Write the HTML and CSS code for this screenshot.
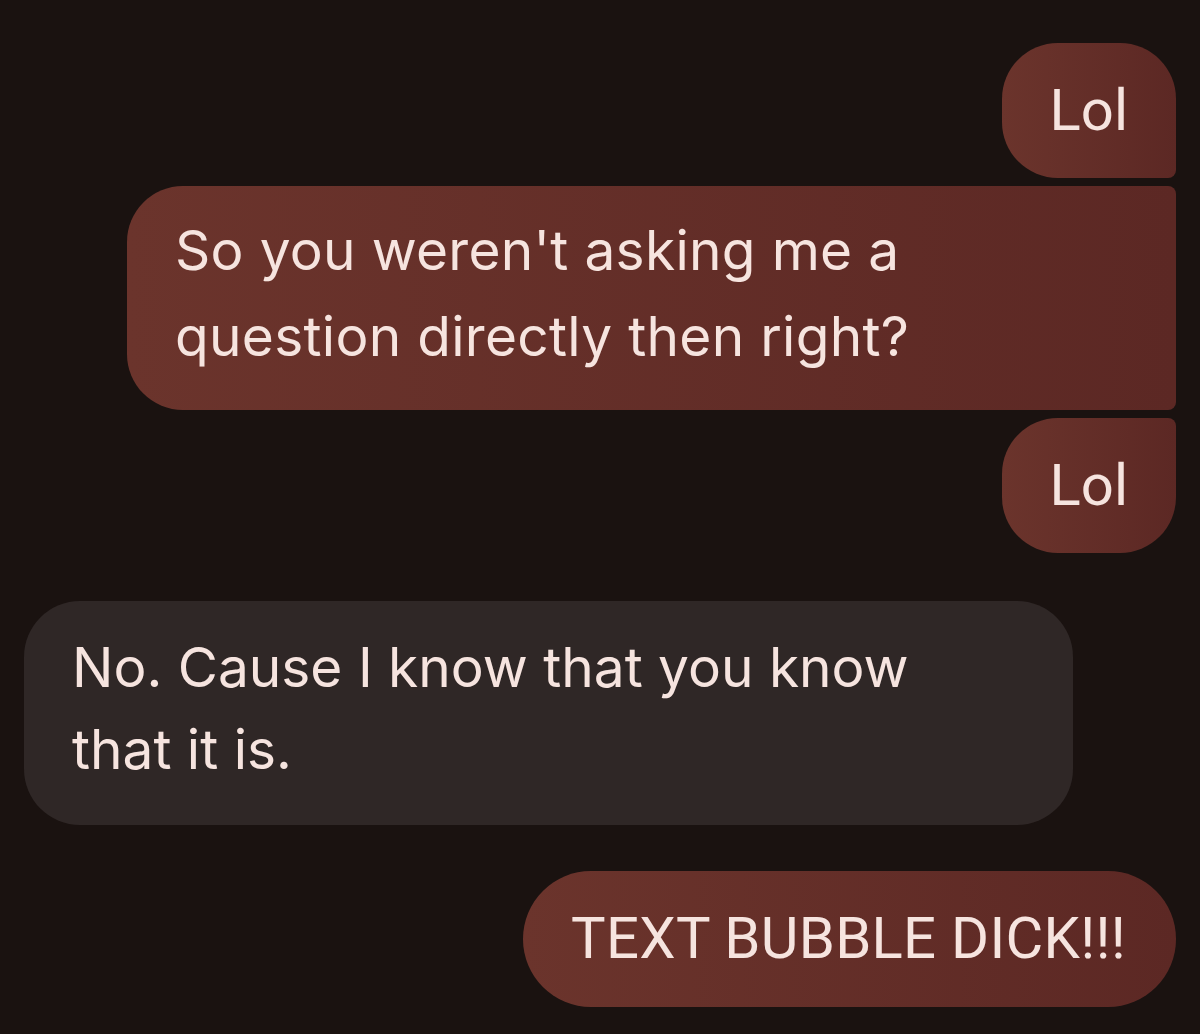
FILE: index.html
```html
<!DOCTYPE html>
<html lang="en">
<head>
    <meta charset="UTF-8">
    <meta name="viewport" content="width=device-width, initial-scale=1.0">
    <title>Messages</title>
    <link rel="stylesheet" href="styles.css">
</head>
<body>
    <div class="thread">
        <!-- Outgoing group -->
        <div class="bubble sent first short">Lol</div>
        <div class="bubble sent middle wide">So you weren't asking me a<br>question directly then right?</div>
        <div class="bubble sent last short">Lol</div>

        <!-- Incoming -->
        <div class="bubble received wide">No. Cause I know that you know<br>that it is.</div>

        <!-- Outgoing single -->
        <div class="bubble sent single caps">TEXT BUBBLE DICK!!!</div>
    </div>
</body>
</html>
```

FILE: styles.css
```css
body {
    margin: 0;
    padding: 0;
    background-color: #1a1210;
    font-family: Inter, Roboto, sans-serif;
    color: #f6e4df;
    height: 1034px;
    overflow: hidden;
}

.thread {
    display: flex;
    flex-direction: column;
    padding: 43px 24px 0 24px;
    gap: 8px;
}

.bubble {
    box-sizing: border-box;
    font-size: 55px;
    line-height: 86px;
    letter-spacing: 0.3px;
    padding: 21px 48px 31px;
    border-radius: 56px;
}

.sent {
    align-self: flex-end;
    background: linear-gradient(90deg, #6b342c, #5c2824);
}

.received {
    align-self: flex-start;
    background-color: #2f2726;
    margin-top: 40px;
    font-size: 55px;
    line-height: 82px;
    letter-spacing: 0;
    padding: 25px 48px 35px;
}

.wide {
    width: 1049px;
}

.short {
    font-family: Roboto, sans-serif;
    font-size: 58px;
    letter-spacing: 0;
    height: 135px;
    padding: 24px 48px;
}

/* corner shapes for grouped outgoing messages */
.first {
    border-radius: 56px 56px 8px 56px;
}

.middle {
    border-radius: 56px 8px 8px 56px;
}

.last {
    border-radius: 56px 8px 56px 56px;
}

.single {
    margin-top: 38px;
    border-radius: 68px;
    height: 136px;
}

.caps {
    font-family: Roboto, sans-serif;
    font-size: 58px;
    padding: 24px 50px 24px 48px;
    letter-spacing: 0.3px;
}
```
